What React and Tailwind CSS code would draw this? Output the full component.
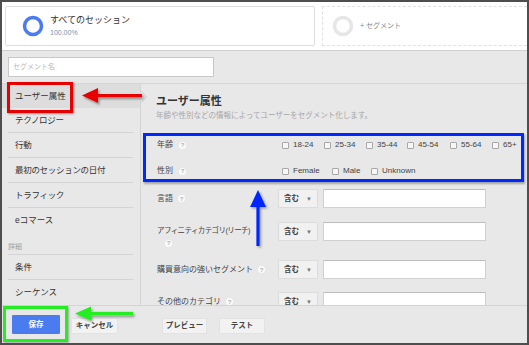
import React from "react";

function Help({ className = "" }) {
  return (
    <span
      className={
        "inline-flex w-[7px] h-[7px] rounded-full bg-[#fafafa] items-center justify-center text-[6px] leading-none text-[#b0b0b0] font-bold shrink-0 " +
        className
      }
    >
      ?
    </span>
  );
}

function Cb() {
  return <span className="w-[7px] h-[7px] border border-[#a8a8a8] bg-[#f6f6f6] rounded-[1px] shrink-0" />;
}

function CbItem({ label, w }) {
  return (
    <div className={"flex items-center gap-[4px] " + w}>
      <Cb />
      <span className="text-[8px] leading-none text-[#444]">{label}</span>
    </div>
  );
}

function SelectBox() {
  return (
    <div className="w-[40px] h-[19px] bg-[#f1f1f1] border border-[#dcdcdc] rounded-[1px] flex items-center justify-between pl-[5px] pr-[5px] shrink-0">
      <span className="text-[7.5px] font-bold text-[#444] leading-none">含む</span>
      <span className="text-[6px] text-[#777] leading-none">▼</span>
    </div>
  );
}

function InputBox() {
  return <div className="w-[163px] h-[19px] bg-white border border-[#d0d0d0] border-t-[#bdbdbd] shrink-0 ml-[5px]" />;
}

export default function App() {
  const side = ["テクノロジー", "行動", "最初のセッションの日付", "トラフィック"];
  return (
    <div className="w-[529px] h-[345px] border-2 border-[#4e4e4e] bg-[#e8e8e8] font-['Liberation_Sans','Noto_Sans_CJK_JP',sans-serif] text-[#333] overflow-hidden">
      <div className="relative w-full h-full flex flex-col">
        {/* top segments */}
        <div className="h-[49px] bg-white border-b border-[#cfcfcf] flex items-center pl-[3px] gap-[7px] shrink-0">
          <div className="w-[310px] h-[40px] border border-[#dedede] rounded-[2px] flex items-center pl-[16px]">
            <svg width="22" height="22" viewBox="0 0 22 22" className="shrink-0">
              <circle cx="11" cy="11" r="8.5" fill="none" stroke="#4a7cf0" strokeWidth="3.5" />
            </svg>
            <div className="ml-[6px] flex flex-col">
              <span className="text-[9px] leading-[11px] text-[#333]">すべてのセッション</span>
              <span className="text-[7px] leading-[9px] mt-[2px] text-[#7f8fa8]">100.00%</span>
            </div>
          </div>
          <div className="flex-1 h-[40px] border border-dashed border-[#e0e0e0] border-r-0 flex items-center pl-[9px]">
            <svg width="22" height="22" viewBox="0 0 22 22" className="shrink-0">
              <circle cx="11" cy="11" r="8.5" fill="none" stroke="#e6e6e6" strokeWidth="3.5" />
            </svg>
            <span className="ml-[6px] text-[7px] text-[#888]">+ セグメント</span>
          </div>
        </div>

        {/* segment name */}
        <div className="h-[32px] pt-[6px] pl-[6px] shrink-0">
          <div className="w-[206px] h-[20px] bg-white border border-[#c8c8c8] flex items-center pl-[4px]">
            <span className="text-[7px] text-[#b8b8b8]">セグメント名</span>
          </div>
        </div>

        {/* panel */}
        <div className="flex-1 border-t border-[#d6d6d6] flex overflow-hidden">
          {/* sidebar */}
          <div className="w-[139px] shrink-0 border-r border-[#d4d4d4] relative text-[8.5px] text-[#333]">
            <div className="h-[24px] bg-[#dddddd] flex items-center pl-[13px]">ユーザー属性</div>
            <svg width="8" height="14" viewBox="0 0 8 14" className="absolute right-[-8px] top-[6px]">
              <path d="M0.5 0.5 L6.5 7 L0.5 13.5" fill="#e2e2e2" stroke="#cfcfcf" strokeWidth="1" />
            </svg>
            <div className="ml-[6px] mr-[7px]">
              {side.map((t) => (
                <div key={t} className="h-[25px] border-b border-[#d3d3d3] flex items-center pl-[7px] tracking-[-0.3px]">
                  {t}
                </div>
              ))}
              <div className="h-[25px] flex items-center pl-[7px]">eコマース</div>
              <div className="h-[22px] border-b border-[#d3d3d3] flex items-end pb-[2px] text-[7px] text-[#a0a0a0]">詳細</div>
              <div className="h-[25px] border-b border-[#d3d3d3] flex items-center pl-[7px]">条件</div>
              <div className="h-[25px] flex items-center pl-[7px]">シーケンス</div>
            </div>
          </div>

          {/* main */}
          <div className="flex-1 pl-[15px] overflow-hidden text-[8px] text-[#444]">
            <div className="mt-[11px] text-[11px] leading-[12px] font-bold text-[#333]">ユーザー属性</div>
            <div className="mt-[3px] text-[7.5px] leading-[11px] text-[#a6a6a6] whitespace-nowrap">
              年齢や性別などの情報によってユーザーをセグメント化します。
            </div>
            <div className="mt-[11px]">
              <div className="h-[26px] flex items-center">
                <div className="w-[126px] pl-[1px] flex items-center gap-[6px] shrink-0">
                  <span>年齢</span>
                  <Help />
                </div>
                <CbItem label="18-24" w="w-[42px]" />
                <CbItem label="25-34" w="w-[42px]" />
                <CbItem label="35-44" w="w-[41px]" />
                <CbItem label="45-54" w="w-[43px]" />
                <CbItem label="55-64" w="w-[42px]" />
                <CbItem label="65+" w="w-[30px]" />
              </div>
              <div className="h-[26px] flex items-center">
                <div className="w-[126px] pl-[1px] flex items-center gap-[6px] shrink-0">
                  <span>性別</span>
                  <Help />
                </div>
                <CbItem label="Female" w="w-[50px]" />
                <CbItem label="Male" w="w-[39px]" />
                <CbItem label="Unknown" w="w-[50px]" />
              </div>
            </div>

            <div className="mt-[5px] h-[19px] flex items-center">
              <div className="w-[122px] pl-[1px] flex items-center gap-[5px] shrink-0">
                <span>言語</span>
                <Help />
              </div>
              <SelectBox />
              <InputBox />
            </div>

            <div className="mt-[14px] flex items-start">
              <div className="w-[122px] pl-[1px] pt-[3px] shrink-0 leading-[12px]">
                <div className="whitespace-nowrap text-[7.5px] tracking-[-0.6px]">アフィニティカテゴリ(リーチ)</div>
                <div className="pl-[8px] flex items-center h-[12px]">
                  <Help />
                </div>
              </div>
              <SelectBox />
              <InputBox />
            </div>

            <div className="mt-[11px] h-[19px] flex items-center">
              <div className="w-[122px] pl-[1px] flex items-center gap-[5px] shrink-0">
                <span className="whitespace-nowrap">購買意向の強いセグメント</span>
                <Help />
              </div>
              <SelectBox />
              <InputBox />
            </div>

            <div className="mt-[13px] h-[19px] flex items-center">
              <div className="w-[122px] pl-[1px] flex items-center gap-[5px] shrink-0">
                <span className="whitespace-nowrap">その他のカテゴリ</span>
                <Help />
              </div>
              <SelectBox />
              <InputBox />
            </div>
          </div>
        </div>

        {/* footer */}
        <div className="h-[38px] shrink-0 border-t border-[#d4d4d4] bg-[#e8e8e8] flex items-end pb-[9px] pl-[10px]">
          <div className="w-[48px] h-[19px] bg-[#4a7cf0] rounded-[1px] flex items-center justify-center text-white text-[7.5px] font-bold">
            保存
          </div>
          <div className="ml-[11px] w-[47px] h-[16px] bg-[#f2f2f2] border border-[#e2e2e2] flex items-center justify-center text-[7.5px] font-bold text-[#444]">
            キャンセル
          </div>
          <div className="ml-[44px] w-[45px] h-[16px] bg-[#f2f2f2] border border-[#e2e2e2] flex items-center justify-center text-[7.5px] font-bold text-[#444]">
            プレビュー
          </div>
          <div className="ml-[12px] w-[46px] h-[16px] bg-[#f2f2f2] border border-[#e2e2e2] flex items-center justify-center text-[7.5px] font-bold text-[#444]">
            テスト
          </div>
        </div>

        {/* annotations */}
        <div className="absolute left-[5px] top-[80px] w-[66px] h-[31px] border-[3px] border-[#e60000] shadow-[1px_1px_2px_rgba(0,0,0,0.35)]" />
        <svg width="66" height="22" viewBox="0 0 66 22" className="absolute left-[78px] top-[84px]">
          <defs>
            <filter id="shR" x="-20%" y="-50%" width="140%" height="200%">
              <feDropShadow dx="1.5" dy="2" stdDeviation="1" floodColor="#000" floodOpacity="0.35" />
            </filter>
          </defs>
          <g filter="url(#shR)" fill="#e60000">
            <polygon points="2,9.5 18,2 18,17" />
            <rect x="17" y="8" width="45" height="3.2" />
          </g>
        </svg>

        <div className="absolute left-[141px] top-[131px] w-[381px] h-[49px] border-[3px] border-[#0028ff] shadow-[1px_2px_2px_rgba(0,0,0,0.3)]" />
        <svg width="22" height="62" viewBox="0 0 22 62" className="absolute left-[246px] top-[186px]">
          <defs>
            <filter id="shB" x="-50%" y="-20%" width="200%" height="140%">
              <feDropShadow dx="1.5" dy="1.5" stdDeviation="1" floodColor="#000" floodOpacity="0.35" />
            </filter>
          </defs>
          <g filter="url(#shB)" fill="#0028ff">
            <polygon points="10,2 2,19 18,19" />
            <rect x="8.4" y="18" width="3.2" height="40" />
          </g>
        </svg>

        <div className="absolute left-[1px] top-[304px] w-[65px] h-[36px] border-[3px] border-[#22ee22] shadow-[1px_1px_2px_rgba(0,0,0,0.3)]" />
        <svg width="64" height="20" viewBox="0 0 64 20" className="absolute left-[71px] top-[303px]">
          <defs>
            <filter id="shG" x="-20%" y="-50%" width="140%" height="200%">
              <feDropShadow dx="1.5" dy="2" stdDeviation="1" floodColor="#000" floodOpacity="0.35" />
            </filter>
          </defs>
          <g filter="url(#shG)" fill="#22ee22">
            <polygon points="2,8.5 18,1.5 18,15.5" />
            <rect x="17" y="6.8" width="43" height="3.4" />
          </g>
        </svg>
      </div>
    </div>
  );
}
